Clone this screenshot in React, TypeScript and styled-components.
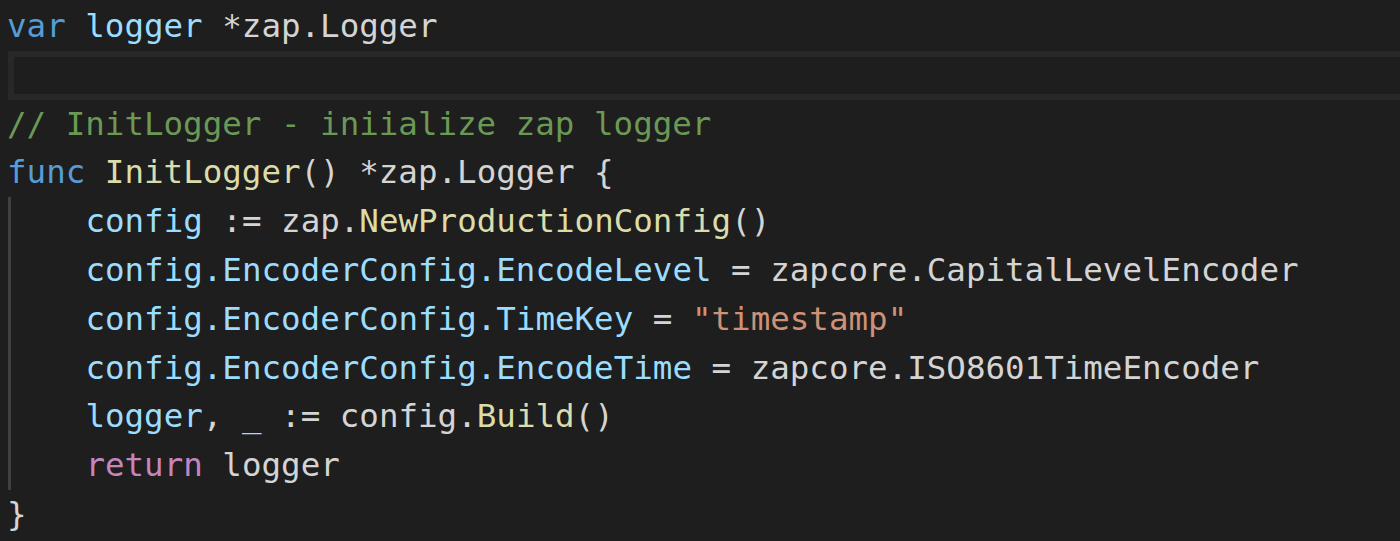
import React from "react";
import styled, { createGlobalStyle } from "styled-components";

const Global = createGlobalStyle`
  html, body {
    margin: 0;
    padding: 0;
    background: #1e1e1e;
  }
`;

const colors: Record<string, string> = {
  kw: "#569cd6",
  var: "#9cdcfe",
  plain: "#d4d4d4",
  comment: "#6a9955",
  fn: "#dcdcaa",
  str: "#ce9178",
  ctrl: "#c586c0",
};

const Editor = styled.div`
  width: 1400px;
  height: 541px;
  box-sizing: border-box;
  overflow: hidden;
  background: #1e1e1e;
  padding: 2px 0 0 7px;
  font-family: "DejaVu Sans Mono", "Liberation Mono", monospace;
  font-size: 32.5px;
  line-height: 48.8px;
  color: #d4d4d4;
`;

const Line = styled.div`
  height: 48.8px;
  white-space: pre;
`;

const CurrentLine = styled.div`
  height: 48.8px;
  margin-left: 1px;
  margin-right: -7px;
  box-sizing: border-box;
  border: 6px solid #282828;
  border-right: none;
`;

const Block = styled.div`
  margin-left: 1px;
  border-left: 3px solid #404040;
  padding-left: 74.4px;
`;

const Tok = styled.span<{ $k: string }>`
  color: ${(p) => colors[p.$k]};
`;

type T = [string, string];

const bodyLines: T[][] = [
  [["var", "config"], ["plain", " := zap."], ["fn", "NewProductionConfig"], ["plain", "()"]],
  [["var", "config.EncoderConfig.EncodeLevel"], ["plain", " = zapcore.CapitalLevelEncoder"]],
  [["var", "config.EncoderConfig.TimeKey"], ["plain", " = "], ["str", "\"timestamp\""]],
  [["var", "config.EncoderConfig.EncodeTime"], ["plain", " = zapcore.ISO8601TimeEncoder"]],
  [["var", "logger"], ["plain", ", "], ["var", "_"], ["plain", " := config."], ["fn", "Build"], ["plain", "()"]],
  [["ctrl", "return"], ["plain", " logger"]],
];

const renderLine = (toks: T[], i: number) => (
  <Line key={i}>
    {toks.map(([k, t], j) => (
      <Tok key={j} $k={k}>
        {t}
      </Tok>
    ))}
  </Line>
);

export default function App() {
  return (
    <>
      <Global />
      <Editor>
        {renderLine([["kw", "var"], ["plain", " "], ["var", "logger"], ["plain", " *zap.Logger"]], 0)}
        <CurrentLine />
        {renderLine([["comment", "// InitLogger - iniialize zap logger"]], 2)}
        {renderLine([["kw", "func"], ["plain", " "], ["fn", "InitLogger"], ["plain", "() *zap.Logger {"]], 3)}
        <Block>{bodyLines.map((l, i) => renderLine(l, i))}</Block>
        {renderLine([["plain", "}"]], 10)}
      </Editor>
    </>
  );
}
